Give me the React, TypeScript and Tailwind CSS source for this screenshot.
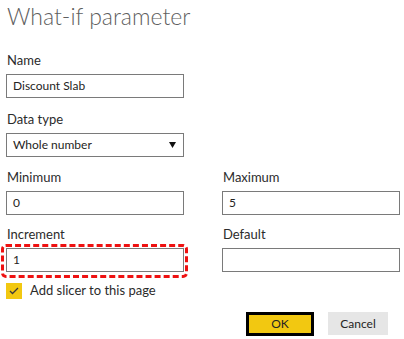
import React from 'react';

function Field({ label, value, className = '' }: { label: string; value?: string; className?: string }) {
  return (
    <div className={className}>
      <div className="h-[20px] leading-[20px] text-[13px] text-[#2b2b2b] pl-[1px]">{label}</div>
      <div className="mt-[4px] h-[24px] border border-[#7a7a7a] bg-white px-[6px] flex items-center text-[12px] text-[#252423]">{value}</div>
    </div>
  );
}

export default function App() {
  return (
    <div className="w-[404px] h-[339px] bg-white overflow-hidden pl-[6px] pr-[4px] font-['Lato','Noto_Sans',sans-serif]">
      <h1 className="h-[32px] text-[23px] font-light leading-[32px] text-[#5f5f5f] pl-[1px]">What-if parameter</h1>

      <Field label="Name" value="Discount Slab" className="w-[178px] mt-[18px]" />

      <div className="w-[178px] mt-[11px]">
        <div className="h-[20px] leading-[20px] text-[13px] text-[#2b2b2b] pl-[1px]">Data type</div>
        <div className="mt-[4px] h-[24px] border border-[#7a7a7a] bg-white pl-[6px] pr-[7px] flex items-center justify-between text-[12px] text-[#252423]">
          <span>Whole number</span>
          <svg width="7" height="6" viewBox="0 0 7 6"><path d="M0 0h7L3.5 6z" fill="#111" /></svg>
        </div>
      </div>

      <div className="grid grid-cols-[178px_178px] gap-x-[38px] mt-[10px]">
        <Field label="Minimum" value="0" />
        <Field label="Maximum" value="5" />
      </div>

      <div className="grid grid-cols-[178px_178px] gap-x-[38px] mt-[9px]">
        <div>
          <div className="h-[20px] leading-[20px] text-[13px] text-[#2b2b2b] pl-[1px]">Increment</div>
          <div className="relative mt-[4px]">
            <div className="h-[24px] border border-[#7a7a7a] bg-white px-[6px] flex items-center text-[12px] text-[#252423]">1</div>
            <div className="absolute -left-[5px] -top-[4px] -right-[4px] -bottom-[6px] border-[3px] border-dashed border-[#ee1111] rounded-[5px] pointer-events-none" />
          </div>
        </div>
        <Field label="Default" value="" />
      </div>

      <div className="flex items-center mt-[11px] h-[16px]">
        <div className="w-[16px] h-[16px] bg-[#f2c811] flex items-center justify-center">
          <svg width="10" height="8" viewBox="0 0 10 8"><path d="M1 4l2.5 2.5L9 1" fill="none" stroke="#3b3a39" strokeWidth="1.3" /></svg>
        </div>
        <span className="ml-[8px] text-[13px] text-[#2b2b2b]">Add slicer to this page</span>
      </div>

      <div className="flex justify-end items-start mt-[13px] pr-[12px] gap-[14px]">
        <button className="w-[68px] h-[24px] border-[3px] border-black bg-[#f2c811] text-[12px] text-[#252423] flex items-center justify-center">OK</button>
        <button className="w-[60px] h-[23px] bg-[#e6e6e6] text-[12px] text-[#252423] flex items-center justify-center">Cancel</button>
      </div>
    </div>
  );
}
